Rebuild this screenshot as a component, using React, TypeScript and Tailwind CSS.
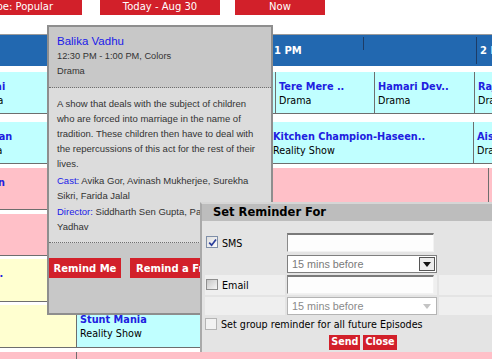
import React from "react";

type Cell = { cls: string; t?: string; g?: string };
type Row = { mt: string; h: string; cells: Cell[] };

const rows: Row[] = [
  {
    mt: "mt-[6px]",
    h: "h-[42px]",
    cells: [
      { cls: "-ml-[33px] w-[208px] bg-[#c0ffff]", t: "Bidaai", g: "Drama" },
      { cls: "w-[100px] bg-[#c0ffff]", t: "Sasural Gen..", g: "Drama" },
      { cls: "w-[99px] bg-[#c0ffff]", t: "Tere Mere ..", g: "Drama" },
      { cls: "w-[100px] bg-[#c0ffff]", t: "Hamari Dev..", g: "Drama" },
      { cls: "w-[120px] bg-[#c0ffff]", t: "Raja Ki Aay..", g: "Drama" },
    ],
  },
  {
    mt: "mt-[8px]",
    h: "h-[42px]",
    cells: [
      { cls: "-ml-[34px] w-[303px] bg-[#c0ffff]", t: "Uttaran", g: "Drama" },
      { cls: "w-[204px] bg-[#c0ffff]", t: "Kitchen Champion-Haseen..", g: "Reality Show" },
      { cls: "w-[120px] bg-[#c0ffff]", t: "Aise Karo Na..", g: "Drama" },
    ],
  },
  {
    mt: "mt-[4px]",
    h: "h-[42px]",
    cells: [
      { cls: "-ml-[136px] w-[624px] bg-[#ffc0c8]", t: "Chand Chupa Badal Mein" },
      { cls: "w-[120px] bg-[#ffc0c8]", t: "Laagi Tujhse..", g: "Drama" },
    ],
  },
  {
    mt: "mt-[4px]",
    h: "h-[42px]",
    cells: [{ cls: "-ml-[250px] w-[900px] bg-[#ffc0c8]", t: "Agle Janam Mohe", g: "Drama" }],
  },
  {
    mt: "mt-[3px]",
    h: "h-[43px]",
    cells: [{ cls: "-ml-[95px] w-[700px] bg-[#ffffd0]", t: "Sanskaar Laxmi..", g: "Drama" }],
  },
  {
    mt: "mt-[3px]",
    h: "h-[43px]",
    cells: [
      { cls: "-ml-[150px] w-[226px] bg-[#ffffd0]", t: "Ganga Kii", g: "Drama" },
      { cls: "w-[420px] bg-[#c0ffff]", t: "Stunt Mania", g: "Reality Show" },
    ],
  },
  {
    mt: "mt-[4px]",
    h: "h-[43px]",
    cells: [
      { cls: "-ml-[150px] w-[226px] bg-[#ffc0c8]" },
      { cls: "w-[420px] bg-[#ffc0c8]" },
    ],
  },
];

function Arrow({ color }: { color: string }) {
  return (
    <svg width="8" height="5" viewBox="0 0 8 5">
      <path d="M0 0 H8 L4 5 Z" fill={color} />
    </svg>
  );
}

export default function App() {
  return (
    <div className="relative h-[359px] w-[492px] overflow-hidden bg-white font-['DejaVu_Sans',sans-serif]">
      {/* top nav */}
      <div className="-mt-[2px] flex h-[17px] text-[10px] text-white">
        <div className="-ml-[43px] flex w-[125px] shrink-0 items-center justify-center bg-[#d2202a]">Type: Popular</div>
        <div className="ml-[18px] flex w-[120px] shrink-0 items-center justify-center bg-[#d2202a]">Today - Aug 30</div>
        <div className="ml-[15px] flex w-[90px] shrink-0 items-center justify-center bg-[#d2202a]">Now</div>
      </div>

      {/* grid */}
      <div className="mt-[19px] border-t border-[#9a9a9a]">
        <div className="flex h-[31px] bg-[#2268b0] text-[10px] font-bold text-white">
          <div className="w-[271px] shrink-0" />
          <div className="flex w-[205px] shrink-0 border-l border-[#1d3c66]">
            <div className="flex w-[91px] items-center pl-[2px]">1 PM</div>
            <div className="mt-[2px] h-[13px] w-px bg-[#1d3c66]" />
          </div>
          <div className="my-[2px] flex shrink-0 items-center whitespace-nowrap border-l border-[#1d3c66] pl-[3px]">2 PM</div>
        </div>

        {rows.map((r, i) => (
          <div key={i} className={`${r.mt} ${r.h} flex border-b border-[#6e6e6e]`}>
            {r.cells.map((c, j) => (
              <div
                key={j}
                className={`${c.cls} shrink-0 overflow-hidden whitespace-nowrap border-l border-[#6e6e6e] pl-[3px] pt-[8px]`}
              >
                {c.t && <div className="text-[9.75px] font-bold leading-[14px] text-[#2020e0]">{c.t}</div>}
                {c.g && <div className="text-[9.6px] leading-[13px] text-black">{c.g}</div>}
              </div>
            ))}
          </div>
        ))}
      </div>

      {/* programme info popup */}
      <div className="absolute left-[47px] top-[25px] flex h-[290px] w-[226px] flex-col border-2 border-[#8e8e8e] bg-[#c8c8c8] font-['Liberation_Sans',Arial,sans-serif]">
        <div className="border-b border-dotted border-[#6f6f6f] px-[8px] pb-[8px] pt-[7px] leading-[15px]">
          <div className="text-[11.5px] text-[#1a1ae8]">Balika Vadhu</div>
          <div className="text-[9.25px] text-[#333]">12:30 PM - 1:00 PM, Colors</div>
          <div className="text-[9.25px] text-[#333]">Drama</div>
        </div>
        <div className="border-b border-dotted border-[#6f6f6f] bg-[#dcdcdc] px-[8px] pb-[8px] pt-[8px] text-[9.5px] leading-[15px] text-[#333]">
          <p>
            A show that deals with the subject of children who are forced into marriage in the name of tradition. These
            children then have to deal with the repercussions of this act for the rest of their lives.
          </p>
          <p className="mt-[2px]">
            <span className="text-[#1a1ae8]">Cast:</span> Avika Gor, Avinash Mukherjee, Surekha Sikri, Farida Jalal
          </p>
          <p className="mt-[1px]">
            <span className="text-[#1a1ae8]">Director:</span> Siddharth Sen Gupta, Pawan Kumar Yadhav
          </p>
        </div>
        <div className="flex flex-1 gap-[9px] pt-[15px] font-['DejaVu_Sans',sans-serif] text-[10px] font-bold text-white">
          <div className="flex h-[20px] w-[72px] shrink-0 items-center justify-center bg-[#d2202a]">Remind Me</div>
          <div className="flex h-[20px] shrink-0 items-center whitespace-nowrap bg-[#d2202a] px-[6px]">Remind a Friend</div>
        </div>
      </div>

      {/* reminder popup */}
      <div className="absolute left-[200px] top-[202px] h-[150px] w-[321px] border-l-2 border-t-2 border-l-[#a9a9a9] border-t-[#d6d6d6] bg-[#e4e4e4]">
        <div className="flex h-[17px] items-center bg-[#bdbdbd] pl-[11px] text-[11.5px] font-bold text-black">
          Set Reminder For
        </div>
        <div className="pl-[3px] pt-[12px] text-[9.6px] text-black">
          <div className="grid grid-cols-[80px_150px_1fr] gap-[2px]">
            {/* SMS */}
            <div className="flex h-[20px] items-start">
              <div className="ml-[1px] mt-[3px] flex h-[12px] w-[12px] shrink-0 items-center justify-center border border-[#7f8fa8] bg-linear-to-br from-[#dedede] to-[#fbfbfb]">
                <svg width="9" height="9" viewBox="0 0 9 9">
                  <path d="M1.2 4.6 L3.6 7.2 L8 1.4" stroke="#2a3e9c" strokeWidth="1.7" fill="none" />
                </svg>
              </div>
              <span className="ml-[4px] mt-[5px] leading-[12px]">SMS</span>
            </div>
            <div className="h-[20px]">
              <div className="h-[19px] w-[147px] border-b border-l border-r border-t-2 border-b-[#f2f2f2] border-l-[#8a8a8a] border-r-[#f2f2f2] border-t-[#7a7a7a] bg-[#fdfdfd]" />
            </div>
            <div />
            {/* select 1 */}
            <div className="h-[18px]" />
            <div className="flex h-[18px] w-[150px] items-center border border-[#7f7f7f] bg-white font-['Liberation_Sans',Arial,sans-serif]">
              <span className="flex-1 pl-[4px] text-[10.8px] text-[#7a7a7a]">15 mins before</span>
              <div className="mr-px flex h-[14px] w-[16px] items-center justify-center border border-[#555] bg-[#ececec]">
                <Arrow color="#111" />
              </div>
            </div>
            <div />
            {/* Email */}
            <div className="flex h-[20px] items-start bg-[#efefef]">
              <div className="ml-[1px] mt-[4px] h-[11px] w-[12px] shrink-0 border border-[#8e8e8e] bg-linear-to-br from-[#c6c6c6] to-[#f6f6f6]" />
              <span className="ml-[4px] mt-[5px] leading-[12px]">Email</span>
            </div>
            <div className="h-[20px] bg-[#efefef]">
              <div className="h-[19px] w-[147px] border-b border-l border-r border-t-2 border-b-[#f2f2f2] border-l-[#8a8a8a] border-r-[#f2f2f2] border-t-[#7a7a7a] bg-[#fdfdfd]" />
            </div>
            <div className="bg-[#efefef]" />
            {/* select 2 */}
            <div className="h-[18px] bg-[#efefef]" />
            <div className="flex h-[18px] w-[150px] items-center border border-[#b4b4b4] bg-white font-['Liberation_Sans',Arial,sans-serif]">
              <span className="flex-1 pl-[4px] text-[10.8px] text-[#8a8a8a]">15 mins before</span>
              <div className="mr-px flex h-[14px] w-[16px] items-center justify-center">
                <Arrow color="#c4c4c4" />
              </div>
            </div>
            <div className="bg-[#efefef]" />
            {/* group */}
            <div className="col-span-3 flex h-[14px] items-start">
              <div className="mt-px h-[12px] w-[12px] shrink-0 border border-[#b4b4b4] bg-[#f2f2f2]" />
              <span className="ml-[4px] mt-[2px] leading-[12px]">Set group reminder for all future Episodes</span>
            </div>
          </div>
          <div className="mt-[4px] flex justify-center gap-[3px] font-bold text-white">
            <div className="flex h-[15px] items-center bg-[#d2202a] px-[2px]">Send</div>
            <div className="flex h-[15px] items-center bg-[#d2202a] px-[2px]">Close</div>
          </div>
        </div>
      </div>
    </div>
  );
}
